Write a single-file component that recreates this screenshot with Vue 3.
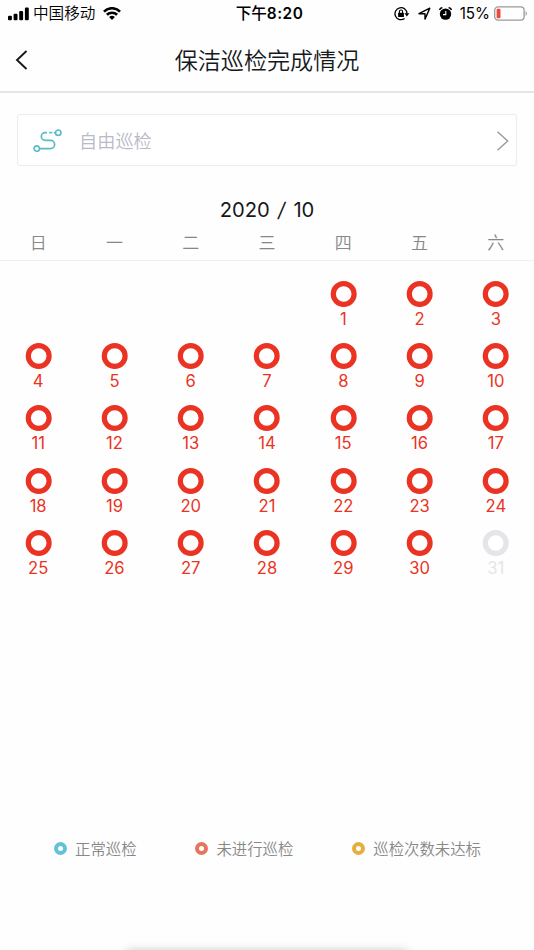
<script setup>
import { ref, computed } from 'vue'

const year = ref(2020)
const month = ref(10)
const lastChecked = 30

const weekDays = ['日', '一', '二', '三', '四', '五', '六']

const legend = [
    { id: 1, name: '正常巡检', type: 'normal' },
    { id: 2, name: '未进行巡检', type: 'missed' },
    { id: 3, name: '巡检次数未达标', type: 'partial' }
]

// Empty cells before the first day of the month
const offset = computed(() => new Date(year.value, month.value - 1, 1).getDay())
const days = computed(() => new Date(year.value, month.value, 0).getDate())
</script>

<template>
    <div class="page">
        <div class="status-bar">
            <div class="status-left">
                <svg class="signal" width="22" height="14" viewBox="0 0 22 14">
                    <rect x="0" y="8.7" width="3.9" height="4.6" rx="1.1" />
                    <rect x="5.6" y="6.7" width="3.9" height="6.6" rx="1.1" />
                    <rect x="11.2" y="3.9" width="3.9" height="9.4" rx="1.1" />
                    <rect x="16.9" y="0.6" width="3.9" height="12.7" rx="1.1" />
                </svg>
                <span class="carrier">中国移动</span>
                <svg class="wifi" width="18" height="14" viewBox="0 0 18 14">
                    <g fill="none" stroke="#000" stroke-width="2.6">
                        <path d="M.9 4.6C5.4.1 12.6.1 17.1 4.6" />
                        <path d="M3.9 7.8C6.8 5 11.2 5 14.1 7.8" />
                    </g>
                    <path d="M6.1 9.9Q9 7.5 11.9 9.9L9 12.9Z" />
                </svg>
            </div>
            <div class="time">下午<b>8:20</b></div>
            <div class="status-right">
                <svg class="lock" width="16" height="14" viewBox="0 0 16 14">
                    <path d="M10.6 11.5A6 6 0 1 1 13 6.7" fill="none" stroke="#000" stroke-width="1.3" />
                    <path d="M10.4 6.3h4.9L12.9 9.5z" />
                    <rect x="4.1" y="5.8" width="5.8" height="4.3" rx=".6" />
                    <path d="M5.4 6.3V4.6a1.6 1.6 0 0 1 3.2 0v1.7" fill="none" stroke="#000" stroke-width="1.1" />
                </svg>
                <svg class="location" width="13" height="14" viewBox="0 0 13 14">
                    <path d="M1 6.7L11.8 1.2 7 12.1V6.7Z" fill="none" stroke="#000" stroke-width="1.4"
                        stroke-linejoin="round" />
                </svg>
                <svg class="alarm" width="13" height="14" viewBox="0 0 13 14">
                    <circle cx="6.5" cy="7.1" r="5.7" />
                    <path d="M.5 2.9Q1.2 1 3.4.6M12.5 2.9Q11.8 1 9.6.6" fill="none" stroke="#000" stroke-width="1.4" />
                    <path d="M6.8 4.1v3.5H4" fill="none" stroke="#fff" stroke-width="1.1" />
                </svg>
                <span class="percent">15%</span>
                <svg class="battery" width="35" height="16" viewBox="0 0 35 16">
                    <rect x=".7" y=".9" width="29.4" height="13.2" rx="3.4" fill="none" stroke="#999"
                        stroke-width="1.3" />
                    <rect x="2.6" y="2.8" width="3.9" height="9.4" rx="1" fill="#eb4b3d" />
                    <path d="M31.6 4.9q2.6 2.6 0 5.2z" fill="#999" />
                </svg>
            </div>
        </div>

        <div class="header">
            <svg class="back" width="14" height="22" viewBox="0 0 14 22">
                <path d="M11.5 2L2 11l9.5 9" fill="none" stroke="#16181c" stroke-width="1.9" />
            </svg>
            <h1>保洁巡检完成情况</h1>
        </div>

        <div class="route-select">
            <svg class="route" width="30" height="24" viewBox="0 0 30 24" fill="none" stroke="#5dbac9"
                stroke-width="1.7">
                <circle cx="3.8" cy="19.6" r="2.7" />
                <circle cx="25.2" cy="3.7" r="2.7" />
                <path
                    d="M6.5 19.6H17.5a4.1 4.1 0 0 0 0-8.2H12.2a3.9 3.9 0 0 1 0-7.8H14M16.3 3.7h3M20.8 3.7h1.6" />
            </svg>
            <span>自由巡检</span>
            <svg class="arrow" width="14" height="22" viewBox="0 0 14 22">
                <path d="M1.5 1.7L11.7 11 1.5 20.3" fill="none" stroke="#999" stroke-width="1.4" />
            </svg>
        </div>

        <div class="month">{{ year }} <span class="slash">/</span> {{ month }}</div>
        <div class="week">
            <span v-for="day in weekDays" :key="day">{{ day }}</span>
        </div>
        <div class="calendar">
            <div v-for="n in offset" :key="'empty-' + n" class="day"></div>
            <div v-for="n in days" :key="n" class="day" :class="{ disabled: n > lastChecked }">
                <svg class="ring" width="27" height="26" viewBox="0 0 27 26">
                    <circle cx="13.7" cy="13" r="10.4" fill="#fff" stroke="currentColor" stroke-width="5.2" />
                </svg>
                <span>{{ n }}</span>
            </div>
        </div>

        <div class="legend">
            <div v-for="item in legend" :key="item.id" class="legend-item">
                <i class="dot" :class="item.type"></i>
                <span>{{ item.name }}</span>
            </div>
        </div>
        <div class="bottom-shadow"></div>
    </div>
</template>

<style>
body {
    background: #fefefe;
}
</style>

<style scoped>
.page {
    position: relative;
    display: flex;
    flex-direction: column;
    width: 534px;
    height: 950px;
    overflow: hidden;
    background-color: #fefefe;
    font-family: Inter, "Noto Sans CJK SC", sans-serif;
}

svg {
    display: block;
    flex: none;
}

.status-bar {
    display: grid;
    grid-template-columns: 1fr auto 1fr;
    align-items: center;
    height: 27px;
    color: #000;
    font-size: 15.6px;
    line-height: 27px;
}

.status-left,
.status-right {
    display: flex;
    align-items: center;
}

.status-left {
    padding-left: 8px;
}

.carrier {
    margin: -2px 8px 0 3px;
    font-family: "Noto Sans CJK SC DemiLight", "Noto Sans CJK SC", sans-serif;
    line-height: 25px;
}

.time {
    padding: 1px 0 0 5px;
    font-weight: 500;
    line-height: 26px;
}

.time b {
    font-size: 15.4px;
    font-weight: 600;
    letter-spacing: 0.5px;
}

.status-right {
    justify-content: flex-end;
    padding-right: 5px;
}

.lock {
    margin-right: 1px;
}

.location {
    margin-left: 7px;
}

.alarm {
    margin-left: 8px;
}

.percent {
    margin: 0 4px 0 8px;
    padding-top: 1px;
    font-size: 15.2px;
    line-height: 26px;
}

.header {
    display: flex;
    align-items: center;
    height: 64px;
    border-bottom: 2px solid #e5e5e5;
}

.back {
    margin: 2px 0 0 15px;
}

h1 {
    flex: 1;
    margin: 0 29px 0 0;
    color: #16181c;
    font-family: "Noto Sans CJK SC DemiLight", "Noto Sans CJK SC", sans-serif;
    font-size: 23.1px;
    font-weight: 400;
    line-height: 34px;
    text-align: center;
}

.route-select {
    display: flex;
    align-items: center;
    height: 52px;
    margin: 21px 17px 0;
    padding: 1px 6px 0 15px;
    box-sizing: border-box;
    border: 1px solid #ececec;
    border-radius: 3px;
    background-color: #fff;
    color: #b9bac8;
    font-family: "Noto Sans CJK SC DemiLight", "Noto Sans CJK SC", sans-serif;
    font-size: 18.2px;
    line-height: 26px;
}

.route-select span {
    flex: 1;
    margin: -1px 0 0 16px;
}

.month {
    margin-top: 29px;
    color: #16181c;
    font-size: 20.2px;
    line-height: 30px;
    text-align: center;
}

.slash {
    display: inline-block;
    margin: 0 2.5px;
    transform: skewX(-9deg);
}

.week {
    display: grid;
    grid-template-columns: repeat(7, 1fr);
    height: 35px;
    border-bottom: 1px solid #f0f0f0;
    color: #888;
    font-family: "Noto Sans CJK SC DemiLight", "Noto Sans CJK SC", sans-serif;
    font-size: 17px;
    line-height: 34px;
    text-align: center;
}

.calendar {
    display: grid;
    grid-template-columns: repeat(7, 1fr);
    grid-auto-rows: 62.4px;
    margin-top: 19.5px;
}

.day {
    display: flex;
    flex-direction: column;
    align-items: center;
    color: #eb3323;
    font-size: 16.6px;
    font-weight: 400;
    line-height: 25px;
}

.ring {
    overflow: visible;
}

.disabled {
    color: #e4e5e9;
}

.legend {
    display: flex;
    justify-content: space-between;
    margin-top: auto;
    padding: 0 53px 90px 54px;
    color: #888;
    font-family: "Noto Sans CJK SC DemiLight", "Noto Sans CJK SC", sans-serif;
    font-size: 15.4px;
    line-height: 24px;
}

.legend-item {
    display: flex;
    align-items: center;
}

.dot {
    width: 13px;
    height: 13px;
    margin-right: 8px;
    box-sizing: border-box;
    border: 4px solid #62c3d8;
    border-radius: 50%;
}

.dot.missed {
    border-color: #e47660;
}

.dot.partial {
    border-color: #e6ae3c;
}

.bottom-shadow {
    position: absolute;
    bottom: -9px;
    left: 126px;
    width: 282px;
    height: 8px;
    border-radius: 8px;
    box-shadow: 0 0 10px rgba(0, 0, 0, 0.26);
}
</style>
